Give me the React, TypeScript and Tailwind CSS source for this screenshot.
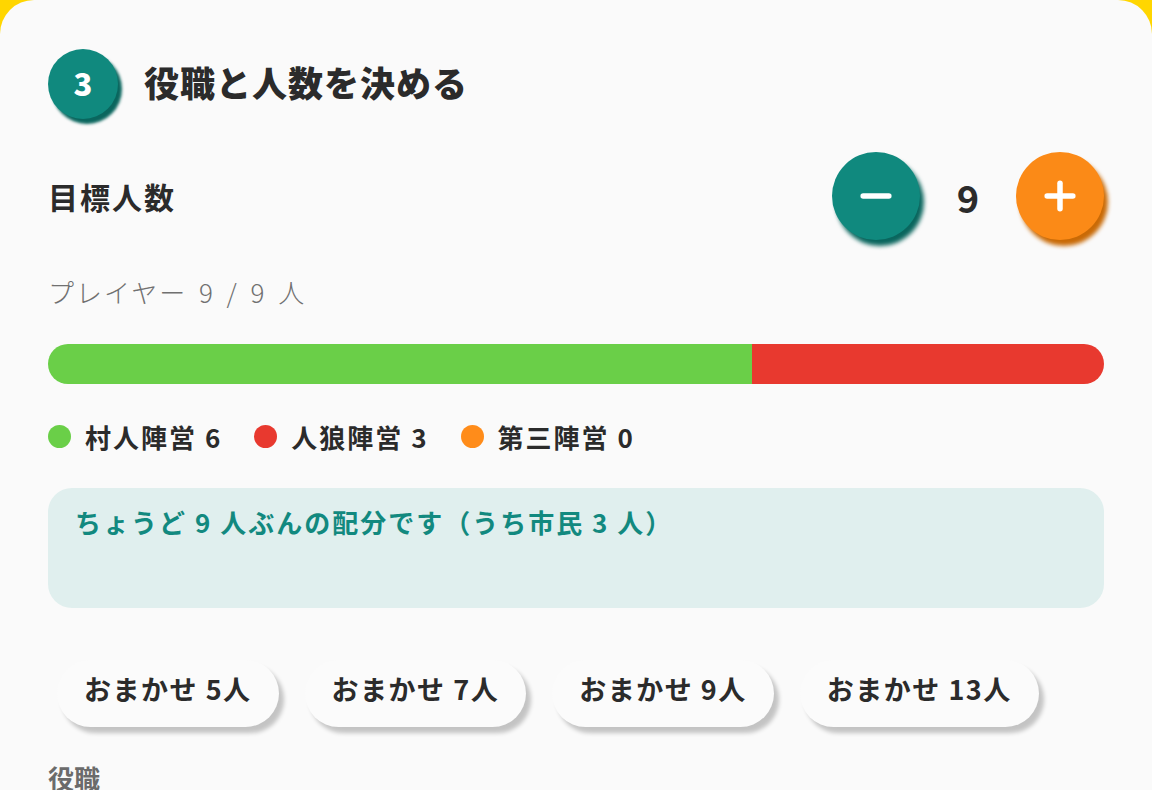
import { Minus, Plus } from "lucide-react"

const font = { fontFamily: '"Noto Sans CJK JP", "Noto Sans", sans-serif' }

const teams = [
  { color: "bg-[#6acf48]", label: "村人陣営 6" },
  { color: "bg-[#e8392f]", label: "人狼陣営 3" },
  { color: "bg-[#ff8c1a]", label: "第三陣営 0" },
]

const presets = [5, 7, 9, 13]

export default function App() {
  return (
    <div className="h-[790px] overflow-hidden bg-[#ffd600]" style={font}>
      <div className="h-[790px] rounded-t-[34px] bg-[#fafafa] px-12 pt-[49px] text-[#2b2b2b]">
        {/* Step heading */}
        <div className="flex items-center gap-[26px]">
          <div className="flex h-[70px] w-[70px] items-center justify-center rounded-full bg-[#10897e] pb-[2px] text-[31px] font-black text-white shadow-[4px_5px_3px_#0a665e]">
            3
          </div>
          <h2 className="-mt-[5px] text-[35px] font-black leading-none tracking-[1px]">役職と人数を決める</h2>
        </div>

        {/* Target count */}
        <div className="mt-[33px] flex h-[88px] items-center justify-between">
          <span className="text-[30px] font-bold tracking-[2px]">目標人数</span>
          <div className="flex items-center">
            <button className="flex h-[88px] w-[88px] items-center justify-center rounded-full bg-[#10897e] text-white shadow-[4px_6px_4px_#0a665e]">
              <Minus className="h-11 w-11" strokeWidth={3} />
            </button>
            <span className="w-24 text-center text-[38px] font-bold">9</span>
            <button className="flex h-[88px] w-[88px] items-center justify-center rounded-full bg-[#fb8a17] text-white shadow-[4px_6px_4px_#c96a06]">
              <Plus className="h-11 w-11" strokeWidth={3} />
            </button>
          </div>
        </div>

        <p className="mt-[32px] text-[26px] font-light leading-[40px] tracking-[2px] text-[#707070] [word-spacing:4px]">
          プレイヤー 9 / 9 人
        </p>

        {/* Team bar */}
        <div className="mt-[32px] flex h-10 overflow-hidden rounded-full">
          <div className="flex-[6] bg-[#6acf48]" />
          <div className="flex-[3] bg-[#e8392f]" />
        </div>

        <div className="mt-[36px] flex h-8 items-center gap-[32px]">
          {teams.map((t) => (
            <div key={t.label} className="flex items-center gap-[14px]">
              <span className={`h-[23px] w-[23px] rounded-full ${t.color}`} />
              <span className="text-[26px] font-bold tracking-[2px]">{t.label}</span>
            </div>
          ))}
        </div>

        {/* Allocation note */}
        <div className="mt-[36px] h-[120px] rounded-[24px] bg-[#e0efee] px-[27px] pt-[18px]">
          <p className="text-[26px] font-bold leading-8 tracking-[2px] text-[#12897f]">
            ちょうど 9 人ぶんの配分です（うち市民 3 人）
          </p>
        </div>

        {/* Presets */}
        <div className="mt-[52px] flex gap-[26px] pl-[9px]">
          {presets.map((n) => (
            <button
              key={n}
              className="h-[67px] rounded-full bg-[#fbfbfb] px-[27px] pb-[8px] text-[27px] font-bold tracking-[1.5px] shadow-[5px_6px_4px_rgba(0,0,0,0.22)]"
            >
              おまかせ {n}人
            </button>
          ))}
        </div>

        <p className="mt-[33px] text-[26px] font-bold leading-9 text-[#6b6b6b]">役職</p>
      </div>
    </div>
  )
}
